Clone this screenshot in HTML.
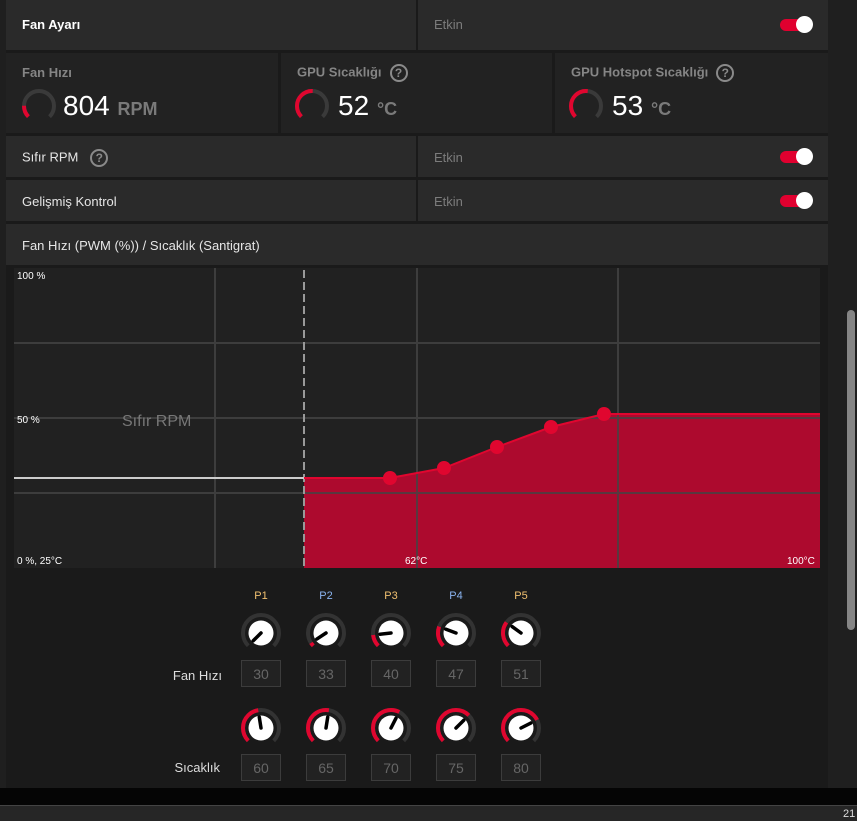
<!DOCTYPE html>
<html><head><meta charset="utf-8"><style>
body{margin:0;width:857px;height:820px;background:#1f1f1f;overflow:hidden;font-family:"Liberation Sans",sans-serif;position:relative}
.a{position:absolute}
.c{position:absolute;background:#2a2a2a}
.t{position:absolute;font-size:13px;color:#e6e6e6}
.g{color:#7c7c7c}
.tog{position:absolute;width:32px;height:12px;border-radius:6px;background:#e0002f}
.tog:after{content:"";position:absolute;right:-1px;top:-3px;width:17px;height:17px;border-radius:50%;background:#fff}
.q{display:inline-block;width:14px;height:14px;border:2px solid #8a8a8a;border-radius:50%;color:#8a8a8a;font-size:12px;font-weight:bold;text-align:center;line-height:14px;vertical-align:middle;margin-left:8px}
</style></head><body>
<div class="a" style="left:6px;top:0;width:822px;height:788px;background:#1a1a1a"></div>
<div class="a" style="left:0;top:788px;width:857px;height:17px;background:#050505"></div>
<div class="a" style="left:0;top:805px;width:857px;height:15px;background:#262626;border-top:1px solid #444"></div>
<div class="a" style="left:843px;top:808px;font-size:11px;color:#ddd">21</div>
<div class="a" style="left:847px;top:310px;width:8px;height:320px;border-radius:4px;background:#858585"></div>

<div class="c" style="left:6px;top:0;width:410px;height:50px"></div>
<div class="c" style="left:418px;top:0;width:410px;height:50px"></div>
<div class="t" style="left:22px;top:17px;font-weight:bold;color:#fff">Fan Ayarı</div>
<div class="t g" style="left:434px;top:17px">Etkin</div>
<div class="tog" style="left:780px;top:19px"></div>

<div class="c" style="left:6px;top:53px;width:272px;height:80px;background:#222"></div>
<div class="c" style="left:281px;top:53px;width:271px;height:80px;background:#222"></div>
<div class="c" style="left:555px;top:53px;width:273px;height:80px;background:#222"></div>
<div class="t" style="left:22px;top:65px;font-weight:bold;color:#858585">Fan Hızı</div>
<div class="t" style="left:297px;top:64px;font-weight:bold;color:#858585">GPU Sıcaklığı<span class="q">?</span></div>
<div class="t" style="left:571px;top:64px;font-weight:bold;color:#858585">GPU Hotspot Sıcaklığı<span class="q">?</span></div>
<div class="a" style="left:63px;top:90px;font-size:28px;color:#fff">804 <span style="font-size:18px;font-weight:bold;color:#7a7a7a">RPM</span></div>
<div class="a" style="left:338px;top:90px;font-size:28px;color:#fff">52 <span style="font-size:18px;font-weight:bold;color:#7a7a7a">°C</span></div>
<div class="a" style="left:612px;top:90px;font-size:28px;color:#fff">53 <span style="font-size:18px;font-weight:bold;color:#7a7a7a">°C</span></div>

<div class="c" style="left:6px;top:136px;width:410px;height:41px"></div>
<div class="c" style="left:418px;top:136px;width:410px;height:41px"></div>
<div class="t" style="left:22px;top:149px">Sıfır RPM<span class="q" style="margin-left:12px">?</span></div>
<div class="t g" style="left:434px;top:150px">Etkin</div>
<div class="tog" style="left:780px;top:151px"></div>

<div class="c" style="left:6px;top:180px;width:410px;height:41px"></div>
<div class="c" style="left:418px;top:180px;width:410px;height:41px"></div>
<div class="t" style="left:22px;top:194px">Gelişmiş Kontrol</div>
<div class="t g" style="left:434px;top:194px">Etkin</div>
<div class="tog" style="left:780px;top:195px"></div>

<div class="c" style="left:6px;top:224px;width:822px;height:41px"></div>
<div class="t" style="left:22px;top:238px">Fan Hızı (PWM (%)) / Sıcaklık (Santigrat)</div>

<svg class="a" style="left:0;top:0" width="857" height="820">
<g fill="none" stroke-width="4">
<circle cx="39" cy="106" r="15" stroke="#3a3a3a" stroke-dasharray="70.7 94.2" transform="rotate(135 39 106)"/>
<circle cx="39" cy="106" r="15" stroke="#e0062f" stroke-dasharray="12 94.2" transform="rotate(135 39 106)"/>
<circle cx="312" cy="106" r="15" stroke="#3a3a3a" stroke-dasharray="70.7 94.2" transform="rotate(135 312 106)"/>
<circle cx="312" cy="106" r="15" stroke="#e0062f" stroke-dasharray="36 94.2" transform="rotate(135 312 106)"/>
<circle cx="586" cy="106" r="15" stroke="#3a3a3a" stroke-dasharray="70.7 94.2" transform="rotate(135 586 106)"/>
<circle cx="586" cy="106" r="15" stroke="#e0062f" stroke-dasharray="37 94.2" transform="rotate(135 586 106)"/>
</g>
<rect x="14" y="268" width="806" height="300" fill="#212121"/>
<polygon points="304,478 390,478 444,468 497,447 551,427 604,414 820,414 820,568 304,568" fill="#ad0a2e"/>
<g stroke="#444" stroke-width="2" opacity="0.8">
<line x1="215" y1="268" x2="215" y2="568"/><line x1="417" y1="268" x2="417" y2="568"/><line x1="618" y1="268" x2="618" y2="568"/>
<line x1="14" y1="343" x2="820" y2="343"/><line x1="14" y1="418" x2="820" y2="418"/><line x1="14" y1="493" x2="820" y2="493"/>
</g>
<line x1="304" y1="270" x2="304" y2="568" stroke="#999" stroke-width="2" stroke-dasharray="8 4"/>
<line x1="14" y1="478" x2="304" y2="478" stroke="#ccc" stroke-width="2"/>
<polyline points="304,478 390,478 444,468 497,447 551,427 604,414 820,414" fill="none" stroke="#e0062f" stroke-width="2"/>
<g fill="#e0062f"><circle cx="390" cy="478" r="7"/><circle cx="444" cy="468" r="7"/><circle cx="497" cy="447" r="7"/><circle cx="551" cy="427" r="7"/><circle cx="604" cy="414" r="7"/></g>
<g font-family="Liberation Sans" font-size="10" fill="#fff">
<text x="17" y="279">100 %</text><text x="17" y="423">50 %</text><text x="17" y="564">0 %, 25°C</text>
<text x="405" y="564">62°C</text><text x="787" y="564">100°C</text>
</g>
<text x="122" y="426" font-family="Liberation Sans" font-size="16" fill="#777">Sıfır RPM</text>
<g font-family="Liberation Sans" font-size="11" fill="#f0c070" text-anchor="middle">
<text x="261" y="599">P1</text><text x="326" y="599" fill="#8ab4f0">P2</text><text x="391" y="599">P3</text><text x="456" y="599" fill="#8ab4f0">P4</text><text x="521" y="599">P5</text>
</g>
<g font-family="Liberation Sans" font-size="13" fill="#ddd" text-anchor="end">
<text x="222" y="680">Fan Hızı</text><text x="220" y="772">Sıcaklık</text>
</g>
<g id="k"></g>
</svg>
<script>
var s=document.querySelector('svg'),ns='http://www.w3.org/2000/svg',xs=[261,326,391,456,521];
var fv=[30,33,40,47,51],tv=[60,65,70,75,80];
function el(n,a){var e=document.createElementNS(ns,n);for(var k in a)e.setAttribute(k,a[k]);s.appendChild(e);return e}
function knob(cx,cy,f){var r=18,C=2*Math.PI*r,L=C*0.75;
el('circle',{cx:cx,cy:cy,r:r,fill:'none',stroke:'#333',"stroke-width":4,"stroke-dasharray":L+' '+C,transform:'rotate(135 '+cx+' '+cy+')'});
if(f>0.005)el('circle',{cx:cx,cy:cy,r:r,fill:'none',stroke:'#e0062f',"stroke-width":4,"stroke-dasharray":(L*f)+' '+C,transform:'rotate(135 '+cx+' '+cy+')'});
el('circle',{cx:cx,cy:cy,r:12.5,fill:'#fff'});
var a=(135+270*f)*Math.PI/180;
el('line',{x1:cx,y1:cy,x2:cx+11*Math.cos(a),y2:cy+11*Math.sin(a),stroke:'#000',"stroke-width":3.5,"stroke-linecap":"round"});}
function box(cx,y,v){el('rect',{x:cx-19.5,y:y+.5,width:39,height:26,fill:'#222',stroke:'#3c3c3c'});
var t=el('text',{x:cx,y:y+19,"text-anchor":"middle","font-family":"Liberation Sans","font-size":14,fill:'#666'});t.textContent=v;}
for(var i=0;i<5;i++){knob(xs[i],633,(fv[i]-30)/70);box(xs[i],660,fv[i]);knob(xs[i],728,(tv[i]-25)/75);box(xs[i],754,tv[i]);}
</script>
</body></html>
